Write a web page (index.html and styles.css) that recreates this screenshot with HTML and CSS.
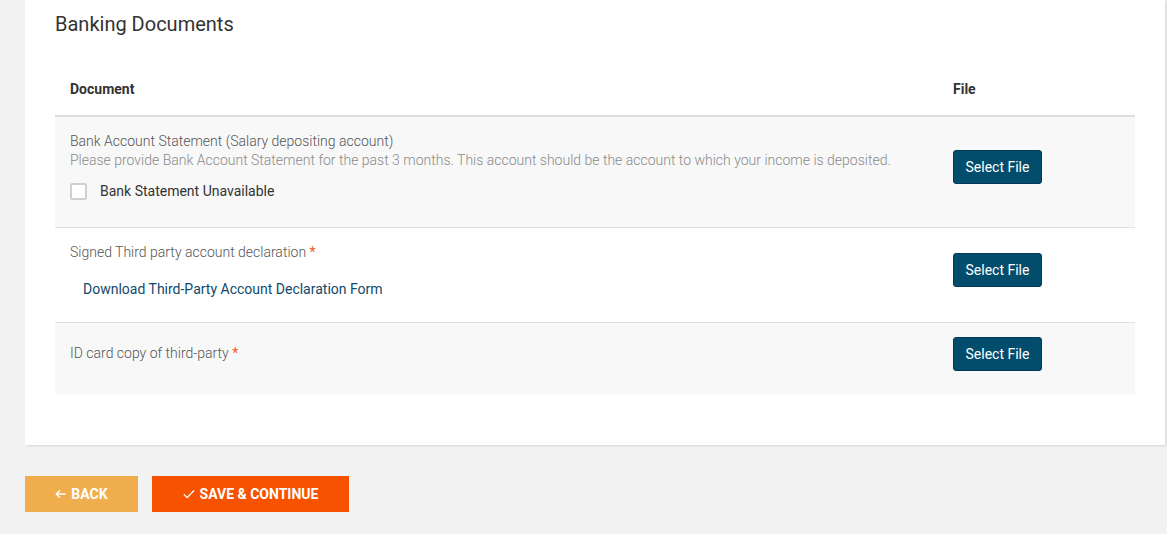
FILE: index.html
```html
<!DOCTYPE html>
<html lang="en">
<head>
<meta charset="utf-8">
<title>Banking Documents</title>
<link rel="stylesheet" href="styles.css">
</head>
<body>
<div class="page">
  <section class="card">
    <h2 class="card-title">Banking Documents</h2>
    <div class="doc-table">
      <div class="doc-row doc-head">
        <div class="cell">Document</div>
        <div class="cell">File</div>
      </div>
      <div class="doc-row row-1 shaded">
        <div class="cell doc-cell">
          <div class="doc-name">Bank Account Statement (Salary depositing account)</div>
          <div class="doc-hint">Please provide Bank Account Statement for the past 3 months. This account should be the account to which your income is deposited.</div>
          <label class="check">
            <span class="check-box"></span>
            <span class="check-label">Bank Statement Unavailable</span>
          </label>
        </div>
        <div class="cell file-cell"><button class="btn-file">Select File</button></div>
      </div>
      <div class="doc-row row-2">
        <div class="cell doc-cell">
          <div class="doc-name">Signed Third party account declaration <span class="req">*</span></div>
          <a class="doc-link" href="#">Download Third-Party Account Declaration Form</a>
        </div>
        <div class="cell file-cell"><button class="btn-file">Select File</button></div>
      </div>
      <div class="doc-row row-3 shaded last">
        <div class="cell doc-cell">
          <div class="doc-name">ID card copy of third-party <span class="req">*</span></div>
        </div>
        <div class="cell file-cell"><button class="btn-file">Select File</button></div>
      </div>
    </div>
  </section>
  <div class="actions">
    <button class="btn-action btn-back">
      <svg width="11" height="10" viewBox="0 0 11 10" aria-hidden="true"><path d="M10.5 5H1.2M5 1.2L1.2 5 5 8.8" fill="none" stroke="#fff" stroke-width="1.3"/></svg>
      BACK
    </button>
    <button class="btn-action btn-save">
      <svg width="12" height="10" viewBox="0 0 12 10" aria-hidden="true"><path d="M0.8 5.2L4.2 8.6 11.2 1.2" fill="none" stroke="#fff" stroke-width="1.3"/></svg>
      SAVE &amp; CONTINUE
    </button>
  </div>
</div>
</body>
</html>
```

FILE: styles.css
```css
* { box-sizing: border-box; }

html, body {
  margin: 0;
  padding: 0;
}

body {
  background: #f2f2f2;
  font-family: Roboto, "Liberation Sans", Arial, sans-serif;
  font-size: 14px;
  color: #333;
}

.page {
  padding-left: 25px;
}

.card {
  width: 1140px;
  background: #fff;
  padding: 12px 30px 50px;
  box-shadow: 1px 1px 2px rgba(0, 0, 0, 0.12);
}

.card-title {
  margin: 0;
  font-size: 20px;
  line-height: 24px;
  font-weight: 400;
  color: #333;
}

.doc-table {
  margin-top: 43px;
}

.doc-row {
  display: grid;
  grid-template-columns: 1fr 197px;
  align-items: center;
  border-bottom: 1px solid #e0e0e0;
}

.doc-row.shaded { background: #f8f8f8; }
.doc-row.last { border-bottom: 0; }

.cell {
  padding: 0 15px;
}

.doc-head {
  align-items: end;
  border-bottom: 2px solid #dedede;
}

.doc-head .cell {
  padding-top: 1px;
  padding-bottom: 16px;
  font-weight: 700;
  font-size: 14px;
  line-height: 19px;
  color: #333;
}

.doc-name {
  line-height: 20px;
  color: #555;
  font-weight: 300;
  font-size: 14px;
}

.doc-hint {
  line-height: 19px;
  color: #8a8a8a;
  font-weight: 300;
  font-size: 14px;
}

.row-1 .doc-cell { padding-top: 14px; padding-bottom: 26px; }
.row-2 .doc-cell { padding-top: 14px; padding-bottom: 23px; }
.row-3 .doc-cell { padding-top: 20px; padding-bottom: 32px; }

.req { color: #f15a24; font-weight: 400; }

.check {
  display: flex;
  align-items: center;
  gap: 13px;
  margin-top: 11px;
  height: 20px;
}

.check-box {
  width: 17px;
  height: 17px;
  border: 2px solid #d0d0d0;
  border-radius: 2px;
  background: #fff;
}

.check-label {
  color: #333;
  line-height: 20px;
}

.doc-link {
  display: block;
  margin-top: 17px;
  margin-left: 13px;
  line-height: 20px;
  color: #0f4a6b;
  text-decoration: none;
}

.btn-file {
  display: block;
  width: 89px;
  height: 34px;
  margin-bottom: 10px;
  padding: 0 0 1px;
  background: #024c6c;
  border: 1px solid #013a54;
  border-radius: 3px;
  color: #fff;
  font-family: inherit;
  font-size: 14px;
}

.actions {
  display: flex;
  gap: 14px;
  margin-top: 31px;
}

.btn-action {
  display: flex;
  align-items: center;
  justify-content: center;
  gap: 5px;
  height: 36px;
  border: 0;
  border-radius: 0;
  color: #fff;
  font-family: inherit;
  font-weight: 700;
  font-size: 14px;
  padding: 0 0 1px;
}

.btn-back {
  width: 113px;
  background: #f0ad4e;
}

.btn-save {
  width: 197px;
  background: #f75200;
}
```
